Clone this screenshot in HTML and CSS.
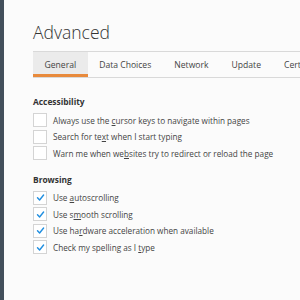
FILE: index.html
```html
<!DOCTYPE html>
<html>
<head>
<meta charset="utf-8">
<link rel="stylesheet" href="styles.css">
</head>
<body>
<div class="app">
  <div class="sidebar"></div>
  <main class="content">
    <h1 class="title">Advanced</h1>
    <nav class="tabs">
      <div class="tab active">General</div>
      <div class="tab">Data Choices</div>
      <div class="tab">Network</div>
      <div class="tab">Update</div>
      <div class="tab">Certificates</div>
    </nav>
    <section class="group">
      <h2 class="group-title">Accessibility</h2>
      <label class="row"><span class="box"></span><span>Always use the <u>c</u>ursor keys to navigate within pages</span></label>
      <label class="row"><span class="box"></span><span>Search for te<u>x</u>t when I start typing</span></label>
      <label class="row"><span class="box"></span><span>Warn me when we<u>b</u>sites try to redirect or reload the page</span></label>
    </section>
    <section class="group">
      <h2 class="group-title">Browsing</h2>
      <label class="row"><span class="box checked"><svg viewBox="0 0 13 13" width="13" height="13"><path d="M3.5 6.8 L5.6 9 L9.6 4" fill="none" stroke="#1f8ee0" stroke-width="1.4" stroke-linecap="round" stroke-linejoin="round"/></svg></span><span>Use <u>a</u>utoscrolling</span></label>
      <label class="row"><span class="box checked"><svg viewBox="0 0 13 13" width="13" height="13"><path d="M3.5 6.8 L5.6 9 L9.6 4" fill="none" stroke="#1f8ee0" stroke-width="1.4" stroke-linecap="round" stroke-linejoin="round"/></svg></span><span>Use s<u>m</u>ooth scrolling</span></label>
      <label class="row"><span class="box checked"><svg viewBox="0 0 13 13" width="13" height="13"><path d="M3.5 6.8 L5.6 9 L9.6 4" fill="none" stroke="#1f8ee0" stroke-width="1.4" stroke-linecap="round" stroke-linejoin="round"/></svg></span><span>Use ha<u>r</u>dware acceleration when available</span></label>
      <label class="row"><span class="box checked"><svg viewBox="0 0 13 13" width="13" height="13"><path d="M3.5 6.8 L5.6 9 L9.6 4" fill="none" stroke="#1f8ee0" stroke-width="1.4" stroke-linecap="round" stroke-linejoin="round"/></svg></span><span>Check my spelling as I <u>t</u>ype</span></label>
    </section>
  </main>
</div>
</body>
</html>
```

FILE: styles.css
```css
html, body {
  margin: 0;
  padding: 0;
  width: 300px;
  height: 300px;
  overflow: hidden;
  background: #fbfbfb;
}
.app {
  display: flex;
  height: 300px;
  font-family: "Open Sans", "Noto Sans", sans-serif;
  color: #333;
}
.sidebar {
  width: 4px;
  flex: none;
  background: #434f5b;
}
.content {
  flex: 1;
  padding: 19px 0 0 29px;
  min-width: 0;
  overflow: hidden;
}
.title {
  margin: 0;
  font-size: 17.5px;
  font-weight: 300;
  line-height: 26px;
  color: #333;
}
.tabs {
  display: flex;
  margin-top: 6px;
  height: 25px;
  border-top: 1px solid #d9d9d9;
  border-bottom: 1px solid #d9d9d9;
  white-space: nowrap;
}
.tab {
  padding: 1px 11.5px 0;
  font-size: 8.6px;
  line-height: 24px;
  color: #444;
  flex: none;
}
.tab.active {
  background: #ebebeb;
  box-shadow: inset 0 -3px 0 #e88a3c;
}
.group {
  margin-top: 17px;
}
.group + .group {
  margin-top: 11px;
}
.group-title {
  margin: 0 0 3px;
  font-size: 8.4px;
  font-weight: 700;
  line-height: 14px;
  color: #333;
}
.row {
  display: flex;
  align-items: center;
  gap: 6px;
  height: 16.5px;
  font-size: 8.2px;
  color: #444;
  white-space: nowrap;
}
.box {
  width: 12px;
  height: 12px;
  flex: none;
  border: 1px solid #d4d4d4;
  background: #fff;
  display: flex;
}
.box svg {
  margin: -0.5px;
}
u {
  text-decoration: underline;
  text-underline-offset: 1px;
}
```
